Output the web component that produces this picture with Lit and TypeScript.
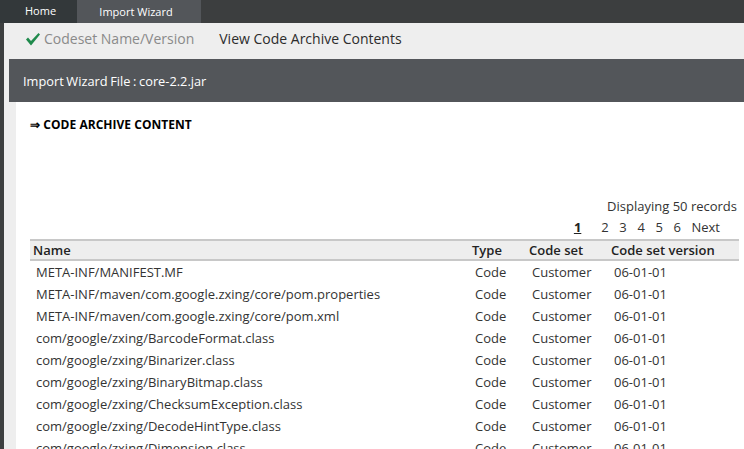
import { LitElement, html, css } from "lit";
import { customElement } from "lit/decorators.js";

const names = [
  "META-INF/MANIFEST.MF",
  "META-INF/maven/com.google.zxing/core/pom.properties",
  "META-INF/maven/com.google.zxing/core/pom.xml",
  "com/google/zxing/BarcodeFormat.class",
  "com/google/zxing/Binarizer.class",
  "com/google/zxing/BinaryBitmap.class",
  "com/google/zxing/ChecksumException.class",
  "com/google/zxing/DecodeHintType.class",
  "com/google/zxing/Dimension.class",
];

@customElement("app-root")
export class AppRoot extends LitElement {
  static styles = css`
    :host { display: block; width: 744px; height: 449px; overflow: hidden; background: #3d3f40; font-family: "Open Sans", sans-serif; color: #222; }
    .tabs { height: 23px; display: flex; background: #3c3e3f; color: #fff; font-size: 11px; }
    .tab { display: flex; align-items: center; justify-content: center; height: 23px; }
    .home { width: 77px; box-sizing: border-box; background: #33383a; padding-bottom: 2px; justify-content: flex-start; }
    .home span { margin-left: 25px; }
    .wiz { width: 124px; background: #53565a; padding-right: 6px; box-sizing: border-box; }
    .body { margin-left: 4px; background: #eee; height: 426px; display: flex; flex-direction: column; }
    .steps { height: 36px; display: flex; align-items: center; padding: 0 0 6px 21px; box-sizing: border-box; font-size: 14px; }
    .steps svg { margin: 3px 4px 0 0; }
    .done { color: #8a8a8a; }
    .cur { margin-left: 25px; color: #2c2c2c; }
    .band { margin-left: 5px; height: 43px; background: #53565a; color: #fff; font-size: 12.8px; word-spacing: -0.7px; display: flex; align-items: center; padding-left: 14px; }
    .panel { margin-left: 12px; background: #fff; flex: 1; padding: 15px 0 0 14px; overflow: hidden; }
    .title { font-size: 12px; font-weight: 700; color: #000; line-height: 16px; word-spacing: 0.2px; }
    .count { margin-top: 65px; text-align: right; font-size: 13px; line-height: 17px; padding-right: 7px; color: #333; }
    .pager { display: flex; justify-content: flex-end; font-size: 13px; line-height: 17px; margin-top: 4px; padding-right: 24px; color: #333; }
    .pager b { text-decoration: underline; margin-right: 20px; color: #222; }
    .pager span { margin-right: 10.6px; }
    .pager span:last-child { margin: 0; }
    .grid { margin-top: 3px; width: 709px; }
    .row { display: grid; grid-template-columns: 441px 56px 82px 1fr; font-size: 13px; height: 22px; line-height: 22px; }
    .head { line-height: 18px; background: #eee; border-top: 2px solid #c8c8c8; border-bottom: 2px solid #c8c8c8; box-sizing: border-box; font-weight: 600; color: #222; height: 22px; }
    .head div { padding-left: 2px; }
    .head div:first-child { padding-left: 3px; }
    .head div:nth-child(2) { padding-left: 1px; }
    .cell { padding-left: 6px; color: #333; white-space: nowrap; }
    .cell.t { padding-left: 4px; }
    .cell.c { padding-left: 5px; }
    .cell.v { padding-left: 5px; }
  `;
  render() {
    return html`
      <div class="tabs">
        <div class="tab home"><span>Home</span></div>
        <div class="tab wiz">Import Wizard</div>
      </div>
      <div class="body">
        <div class="steps">
          <svg width="15" height="13" viewBox="0 0 15 13"><path d="M1 6.5 L3 4.5 L6 8 L13.5 0 L15 1.5 L6 12.5 Z" fill="#1f8a4c"/></svg>
          <span class="done">Codeset Name/Version</span>
          <span class="cur">View Code Archive Contents</span>
        </div>
        <div class="band">Import Wizard File : core-2.2.jar</div>
        <div class="panel">
          <div class="title">⇒ CODE ARCHIVE CONTENT</div>
          <div class="count">Displaying 50 records</div>
          <div class="pager"><b>1</b><span>2</span><span>3</span><span>4</span><span>5</span><span>6</span><span>Next</span></div>
          <div class="grid">
            <div class="row head"><div>Name</div><div>Type</div><div>Code set</div><div>Code set version</div></div>
            ${names.map((n) => html`<div class="row"><div class="cell">${n}</div><div class="cell t">Code</div><div class="cell c">Customer</div><div class="cell v">06-01-01</div></div>`)}
          </div>
        </div>
      </div>
    `;
  }
}
